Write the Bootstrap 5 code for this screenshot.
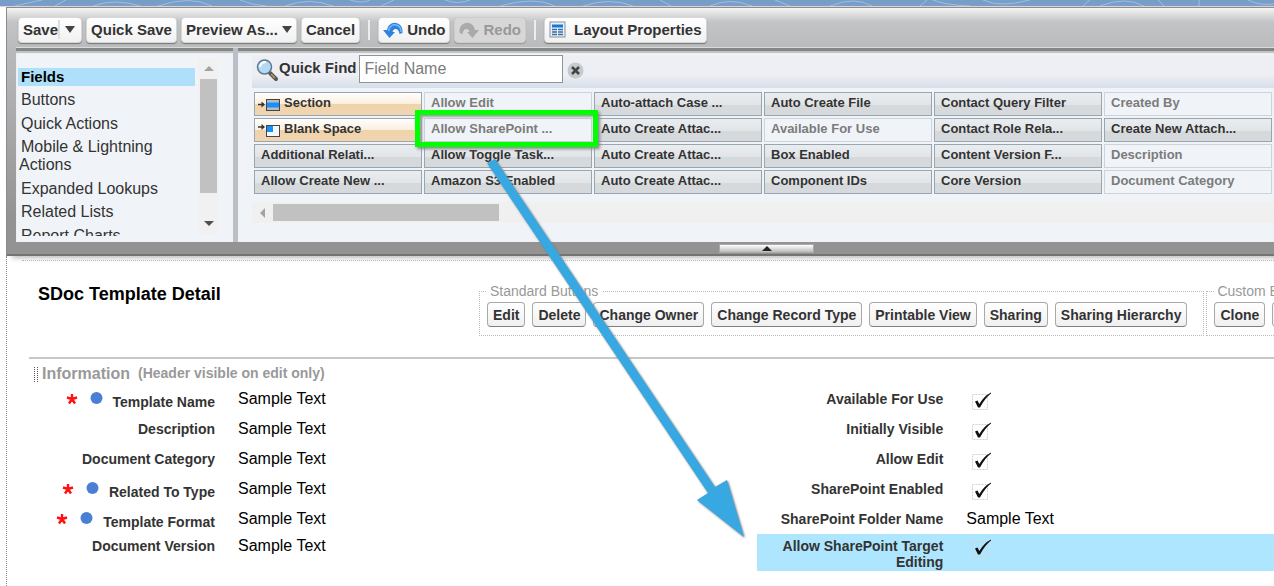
<!DOCTYPE html>
<html lang="en">
<head>
<meta charset="utf-8">
<meta name="viewport" content="width=device-width, initial-scale=1">
<title>Page Layout Editor</title>
<link href="https://cdn.jsdelivr.net/npm/bootstrap@5.3.0/dist/css/bootstrap.min.css" rel="stylesheet">
<script src="https://cdn.jsdelivr.net/npm/bootstrap@5.3.0/dist/js/bootstrap.bundle.min.js"></script>
<style>
body{font-family:"Liberation Sans",Arial,sans-serif;font-size:16px;line-height:18px;color:#000;background:#fff;overflow-x:hidden;min-height:100vh}
.brand-strip{height:7px;background:#789dc8;border-bottom:1px solid #d5d9df}
.brand-strip svg{width:100%;height:6px}
.page-body{padding-left:6px}
.editor{background:linear-gradient(#f4f4f4,#bcbdbf 20px,#b5b6b8 60px,#939393 210px);border-top:1px solid #938b8b;border-left:1px solid #8b8b8b;box-shadow:6px 2px 5px #bbb}
.toolbar{height:39px;padding:4px 0 0 11px;background:linear-gradient(#f4f4f4,#c3c4c6 14px,#babbbd)}
.tool-btn{height:26px;padding:0 4px;border:1px solid #d6d6d6;border-radius:4px;background:linear-gradient(#fff,#f1f1f1);box-shadow:0 1px 1px #777;font-size:15px;font-weight:bold;line-height:18px;color:#333;white-space:nowrap}
.tool-btn:disabled{color:#999;background:#d7d7d7;border-color:#ccc;box-shadow:0 1px 1px #999}
.caret-down{width:0;height:0;border:5px solid transparent;border-top:7px solid #444;border-bottom:0}
.save-split{border-left:2px solid #ddd;height:19px;padding:0 2px 0 5px}
.tool-sep{width:2px;height:20px;background:#ededed}
.well-area{margin-left:9px;background:#f0f4f8;border-top:1px solid #dadcdc;box-shadow:inset 0 3px 0 #858787,inset 0 5px 1px #bfc1c1;height:195px}
.side{width:217px;padding:10px 14px 8px 2px;flex:none}
.type-list{width:177px;height:178px;overflow:hidden;padding-top:10px;margin:0;list-style:none}
.type-list li{margin-bottom:5px}
.type-list li:nth-child(even){margin-bottom:6px}
.type-list a{display:block;color:#333;text-decoration:none;padding-left:1px;text-indent:2px;max-width:150px}
.type-list a.current{background:#aee0f9;color:#000;font-weight:bold;font-size:15px;max-width:none}
.vbar{width:21px;background:#f1f1f1}
.vbar .thumb{width:17px;height:114px;background:#c1c1c1}
.tri{width:0;height:0;border:5px solid transparent}
.tri-up{border-bottom-color:#a3a3a3;border-top:0}
.tri-down{border-top-color:#505050;border-bottom:0}
.tri-left{border-right:5px solid #a3a3a3;border-left:0}
.divider{width:5px;background:#bcbfc6;flex:none}
.palette{padding:7px 0 0 14px;overflow:hidden}
.find-bar{height:33px;background:linear-gradient(#eeeff4 60%,#d6dfea)}
.find-bar label{font-size:15px;font-weight:bold;color:#333;line-height:18px;margin:4px 2px 0 0}
.find-input{width:204px;height:28px;border:1px solid #8f9499;border-radius:0;padding:0 5px;background:#fff;font-size:16px;color:#000}
.find-input::placeholder{color:#7c7c7c;opacity:1}
.clear-btn{border:0;background:none;padding:0;line-height:0;margin-top:7px}
.items{display:grid;grid-auto-flow:column;grid-template-rows:repeat(4,24px);grid-auto-columns:168px;gap:2px;padding:4px 0 0 2px}
.item{position:relative;border:1px solid #98a6b0;background:linear-gradient(#e9edf0,#e2e5e8 55%,#d5d9dc 56%,#d7dadd);font-size:13px;line-height:18px;font-weight:bold;color:#333;padding:1px 6px 0;white-space:nowrap}
.item.used{background:#f0f4f8;border-color:#ccd4da;color:#7b7b7b}
.item.special{background:linear-gradient(#fff,#fbeedd 50%,#efd3ab 52%,#f0d5b1);padding-left:3px}
.callout{position:absolute;inset:-9px -7px -6px -10px;border:5px solid #0f0;box-shadow:2px 2px 3px #888,inset 2px 2px 3px #999;z-index:2}
.hbar{height:21px;background:#f0f0f0;margin-top:8px;padding-left:8px}
.hbar .thumb{width:226px;height:17px;background:#c1c1c1}
.editor-foot{height:14px;background:#939393;border-bottom:2px solid #747474}
.fold-btn{margin-left:56.2%;width:95px;height:9px;border:1px solid #aaa;padding:0;background:linear-gradient(#fff,#bbb)}
.canvas{border-left:1px dotted #888;min-height:330px;padding:4px 0 0 15px}
.canvas-inner{border-top:1px dotted #bbb;padding-left:7px}
.head-row{padding-top:21px;height:96px;gap:2px}
.detail-title{width:448px;flex:none;font-size:18px;line-height:24px;font-weight:bold;padding-left:9px;margin:0}
.btn-group-box{border:1px dotted #bbb;padding:0 16px 0 7px;flex:none;height:54px}
.btn-group-box legend{float:none;width:auto;margin:0 0 2px;padding:0 4px 0 3px;font-size:14px;line-height:18px;color:#999}
.mini-btn{height:25px;padding:0 5px;border:1px solid #a9a9a9;border-bottom-color:#7f7f7f;border-radius:4px;background:linear-gradient(#fff,#f0f0f0);font-size:14px;line-height:18px;font-weight:bold;color:#333;white-space:nowrap}
.btn-line{gap:7px}
.section-head{border-top:2px solid #c8c8c8;padding:5px 0 4px 5px;color:#999;font-size:16px;font-weight:bold;margin:0}
.section-head span{font-size:14px}
.grip{width:4px;height:16px;background:repeating-linear-gradient(#fff 0 1px,transparent 1px 2px),linear-gradient(90deg,#555 1px,#fff 1px 3px,#555 3px)}
.details{display:grid;grid-template-columns:58.5% 1fr}
.field{display:flex;align-items:start;padding-top:3px;min-height:30px}
.field.tight{min-height:27px}
.field-label{width:186px;flex:none;text-align:right;font-size:14px;line-height:16px;font-weight:bold;color:#333;padding-top:1px}
.field-label.req{display:flex;justify-content:flex-end;padding-top:4px}
.field-label.req svg{flex:none;width:38px;height:14px;margin-right:9px;margin-top:-2px}
.field-value{padding-left:23px}
.tick{appearance:none;width:20px;height:20px;margin:2px 0 0 28px;background:url("data:image/svg+xml,%3Csvg xmlns='http://www.w3.org/2000/svg' viewBox='0 0 20 20'%3E%3Crect x='1.500' y='2.500' width='15' height='15' fill='none' stroke='%23d2d2d2' stroke-dasharray='2 1'/%3E%3Cpath d='M4 9.500 L6.500 8.500 L8.300 12 Q13 4 20 .5 L20 1.500 Q14 6 9 15.500 L7 15.500Z' fill='%23111'/%3E%3C/svg%3E")}
.highlight{background:#aee6ff;min-height:37px}
.arrow-note{position:absolute;left:480px;top:150px;width:280px;height:400px;pointer-events:none;z-index:3}
</style>
</head>
<body class="position-relative">
<div class="brand-strip"><svg class="d-block" viewBox="0 0 1274 6" preserveAspectRatio="xMidYMid slice" fill="none" stroke="#a3bddb" stroke-width="1">
<path d="M15 6Q32 2 42 0M55 6L66 0M93 6Q115-2 140 6M158 6Q190-5 212 6M240 0Q252 5 266 6M285 6Q310-3 333 6M350 0Q363 4 370 0M381 6L394 0M445 0Q458 5 470 0M500 6Q535-4 555 6M583 6Q610-3 633 6M660 0L671 6M710 6Q730-3 752 6M775 0L790 6M830 6Q855-4 872 6M920 6L927 0M933 0Q945 5 970 6M983 0Q1000 8 1030 0M1083 6Q1088 1 1090 0M1100 6Q1125-4 1144 6M1158 0L1164 6M1199 6V0M1248 0Q1260 6 1274 4"/></svg></div>
<div class="page-body">
<header class="editor">
  <div class="toolbar d-flex align-items-center">
    <button class="tool-btn d-flex align-items-center" type="button">Save<span class="save-split d-flex align-items-center"><span class="caret-down"></span></span></button>
    <button class="tool-btn ms-1" type="button">Quick Save</button>
    <button class="tool-btn d-flex align-items-center gap-1 ms-1" type="button">Preview As...<span class="caret-down"></span></button>
    <button class="tool-btn ms-1" type="button">Cancel</button>
    <span class="tool-sep ms-2"></span>
    <button class="tool-btn d-flex align-items-center gap-1 ms-2" type="button"><svg width="20" height="16" viewBox="0 0 20 16"><path d="M0 8H4C5 3 9 0 13 1C18 2 20 6 19.500 11L16.500 12C16 8 14 6.500 12 7Q10 7.500 9.500 10H12L6.500 16Z" fill="#2d83df"/><path d="M5.500 9C6.500 4 10 2 13 3C16 3.500 18 6 18 10" fill="none" stroke="#7ab8f2" stroke-width="1.500"/></svg>Undo</button>
    <button class="tool-btn d-flex align-items-center gap-1 ms-1" type="button" disabled><svg width="20" height="16" viewBox="0 0 20 16"><path d="M20 8H16C15 3 11 0 7 1C2 2 0 6 .5 11L3.500 12C4 8 6 6.500 8 7Q10 7.500 10.500 10H8L13.500 16Z" fill="#aaa"/></svg>Redo</button>
    <span class="tool-sep ms-2"></span>
    <button class="tool-btn d-flex align-items-center gap-1 ms-2" type="button"><svg class="mx-1 ms-0" width="17" height="17" viewBox="0 0 17 17"><rect x="1" y="1" width="15" height="15" fill="#e8f1fa" stroke="#8a9097"/><path d="M3 5H14" stroke="#1777d2" stroke-width="3"/><path d="M3 8.500H8M9 8.500H14M3 11H8M9 11H14M3 13.500H8M9 13.500H14" stroke="#3b6ea5" stroke-width="1.500"/></svg>Layout Properties</button>
  </div>
  <div class="well-area d-flex">
    <nav class="side d-flex justify-content-between" aria-label="Element types">
      <ul class="type-list ps-0">
        <li><a class="current" href="#">Fields</a></li>
        <li><a href="#">Buttons</a></li>
        <li><a href="#">Quick Actions</a></li>
        <li><a href="#">Mobile &amp; Lightning Actions</a></li>
        <li><a href="#">Expanded Lookups</a></li>
        <li><a href="#">Related Lists</a></li>
        <li><a href="#">Report Charts</a></li>
      </ul>
      <div class="vbar d-flex flex-column align-items-center"><span class="tri tri-up my-2"></span><span class="thumb"></span><span class="tri tri-down mt-auto mb-2"></span></div>
    </nav>
    <div class="divider"></div>
    <div class="palette flex-grow-1">
      <div class="find-bar d-flex align-items-start">
        <svg class="ms-1 mt-1" width="23" height="23" viewBox="0 0 23 23"><path d="M14 14L20 20" stroke="#555" stroke-width="4" stroke-linecap="round"/><path d="M15 15L19 19" stroke="#a98b5a" stroke-width="2"/><circle cx="8.500" cy="8" r="7" fill="#b4daf3" stroke="#5d7790" stroke-width="1.500"/><path d="M4 8Q5 3 10 3" fill="none" stroke="#fff" stroke-width="2"/></svg>
        <label for="find">Quick Find</label>
        <input class="find-input" id="find" type="text" placeholder="Field Name">
        <button class="clear-btn ms-1" type="button" aria-label="Clear"><svg width="17" height="17" viewBox="0 0 17 17"><circle cx="8.500" cy="8.500" r="8" fill="#c5cacd"/><path d="M5 5L12 12M12 5L5 12" stroke="#444" stroke-width="2.500"/></svg></button>
      </div>
      <div class="items">
        <div class="item special"><svg width="22" height="14" viewBox="0 0 22 14"><path d="M0 7.500H6" stroke="#333" stroke-width="1.500"/><path d="M3.500 4.500L7 7.500L3.500 10.500Z" fill="#333"/><rect x="8.500" y="2.500" width="13" height="11" fill="#bbb" stroke="#444"/><path d="M9 8H21" stroke="#1590ff" stroke-width="5"/></svg><span class="ms-1">Section</span></div>
        <div class="item special"><svg width="22" height="14" viewBox="0 0 22 14"><path d="M0 4H6" stroke="#333" stroke-width="1.500"/><path d="M3.500 1L7 4L3.500 7Z" fill="#333"/><rect x="8.500" y="2.500" width="13" height="11" fill="#f4f8fc" stroke="#444"/><rect x="9" y="3" width="6" height="6" fill="#1590ff"/></svg><span class="ms-1">Blank Space</span></div>
        <div class="item">Additional Relati...</div><div class="item">Allow Create New ...</div>
        <div class="item used">Allow Edit</div><div class="item used">Allow SharePoint ...<span class="callout"></span></div><div class="item">Allow Toggle Task...</div><div class="item">Amazon S3 Enabled</div>
        <div class="item">Auto-attach Case ...</div><div class="item">Auto Create Attac...</div><div class="item">Auto Create Attac...</div><div class="item">Auto Create Attac...</div>
        <div class="item">Auto Create File</div><div class="item used">Available For Use</div><div class="item">Box Enabled</div><div class="item">Component IDs</div>
        <div class="item">Contact Query Filter</div><div class="item">Contact Role Rela...</div><div class="item">Content Version F...</div><div class="item">Core Version</div>
        <div class="item used">Created By</div><div class="item">Create New Attach...</div><div class="item used">Description</div><div class="item used">Document Category</div>
      </div>
      <div class="hbar d-flex align-items-center"><span class="tri tri-left me-2"></span><span class="thumb"></span></div>
    </div>
  </div>
  <div class="editor-foot d-flex align-items-center"><button class="fold-btn d-flex justify-content-center align-items-center" type="button" aria-label="Collapse palette"><svg width="10" height="5" viewBox="0 0 10 5"><path d="M0 5L5 0L10 5Z" fill="#222"/></svg></button></div>
</header>
<main class="canvas">
  <div class="canvas-inner">
    <div class="head-row d-flex overflow-hidden">
      <h1 class="detail-title">SDoc Template Detail</h1>
      <fieldset class="btn-group-box"><legend>Standard Buttons</legend>
        <div class="d-flex btn-line">
          <button class="mini-btn" type="button">Edit</button><button class="mini-btn" type="button">Delete</button><button class="mini-btn" type="button">Change Owner</button><button class="mini-btn" type="button">Change Record Type</button><button class="mini-btn" type="button">Printable View</button><button class="mini-btn" type="button">Sharing</button><button class="mini-btn" type="button">Sharing Hierarchy</button>
        </div></fieldset>
      <fieldset class="btn-group-box"><legend>Custom Buttons</legend>
        <div class="d-flex btn-line"><button class="mini-btn" type="button">Clone</button><button class="mini-btn" type="button" aria-label="More"></button></div></fieldset>
    </div>
    <h2 class="section-head d-flex align-items-center"><i class="grip me-1"></i>Information<span class="ms-2">(Header visible on edit only)</span></h2>
    <div class="details">
      <div>
        <div class="field"><span class="field-label req"><svg viewBox="0 0 38 14"><use href="#reqmark"/></svg>Template Name</span><span class="field-value">Sample Text</span></div>
        <div class="field"><span class="field-label">Description</span><span class="field-value">Sample Text</span></div>
        <div class="field"><span class="field-label">Document Category</span><span class="field-value">Sample Text</span></div>
        <div class="field"><span class="field-label req"><svg viewBox="0 0 38 14"><use href="#reqmark"/></svg>Related To Type</span><span class="field-value">Sample Text</span></div>
        <div class="field tight"><span class="field-label req"><svg viewBox="0 0 38 14"><use href="#reqmark"/></svg>Template Format</span><span class="field-value">Sample Text</span></div>
        <div class="field"><span class="field-label">Document Version</span><span class="field-value">Sample Text</span></div>
      </div>
      <div>
        <div class="field"><label class="field-label" for="c1">Available For Use</label><input class="tick" id="c1" type="checkbox" checked></div>
        <div class="field"><label class="field-label" for="c2">Initially Visible</label><input class="tick" id="c2" type="checkbox" checked></div>
        <div class="field"><label class="field-label" for="c3">Allow Edit</label><input class="tick" id="c3" type="checkbox" checked></div>
        <div class="field"><label class="field-label" for="c4">SharePoint Enabled</label><input class="tick" id="c4" type="checkbox" checked></div>
        <div class="field tight"><span class="field-label">SharePoint Folder Name</span><span class="field-value">Sample Text</span></div>
        <div class="field highlight"><label class="field-label" for="c5">Allow SharePoint Target Editing</label><input class="tick" id="c5" type="checkbox" checked></div>
      </div>
    </div>
  </div>
</main>
</div>
<svg class="arrow-note" viewBox="480 150 280 400"><path d="M487 163L495 159L715 487L727 480L744 537L697 500L708 493Z" fill="#37a8e1" style="filter:drop-shadow(1px 1px 1px #777)"/></svg>
<svg width="0" height="0" class="position-absolute"><defs><g id="reqmark"><path d="M6 2V7M6 7L1 5.500M6 7L11 5.500M6 7L3 11.500M6 7L9 11.500" stroke="#f11" stroke-width="2.400"/><circle cx="30.500" cy="6" r="6" fill="#4a80d4"/></g></defs></svg>
</body>
</html>
